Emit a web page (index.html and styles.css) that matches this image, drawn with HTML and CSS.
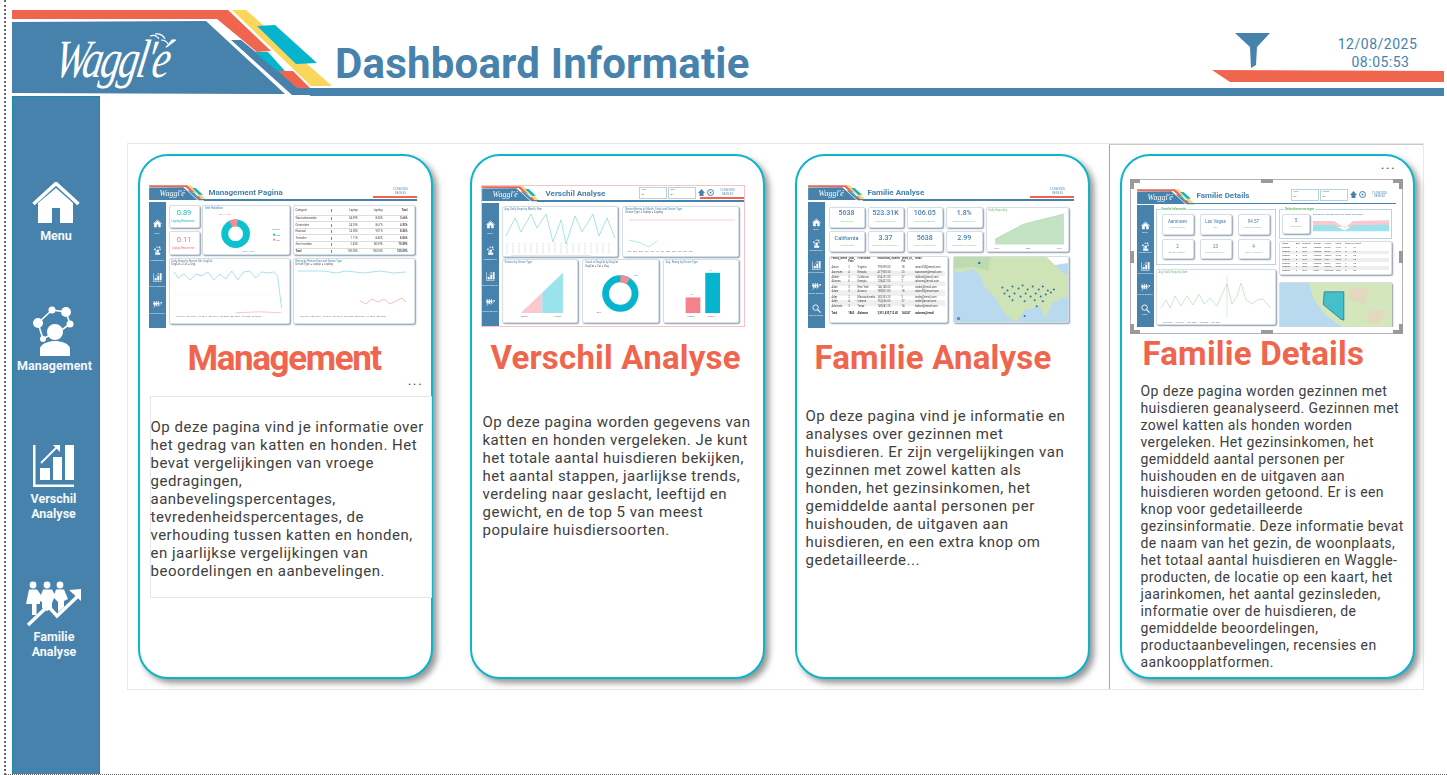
FILE: index.html
```html
<!DOCTYPE html>
<html lang="nl">
<head>
<meta charset="utf-8">
<title>Dashboard Informatie</title>
<link rel="stylesheet" href="styles.css">
</head>
<body>
<svg class="defs" aria-hidden="true">
  <symbol id="banner" viewBox="0 0 340 96">
    <polygon fill="#4682ac" points="12,22 206,21 285,94 12,93"/>
    <polygon fill="#fad75a" points="232,10 246,10 332,86 311,86"/>
    <polygon fill="#f0654d" points="12,10 228,10 271,51 257,52 217,19 12,19"/>
    <polygon fill="#4682ac" points="231,40 241,40 300,88 340,88 340,95 292,95"/>
    <polygon fill="#05b5ce" points="255,52 268,52 285,71 277,71"/>
    <polygon fill="#f0654d" points="278,71 293,71 310,88 297,88"/>
    <polygon fill="#05b5ce" points="257,26 275,25 317,63 296,64"/>
  </symbol>
  <symbol id="i-home" viewBox="0 0 48 42">
    <polyline points="1.5,22 24,1.5 46.5,22" fill="none" stroke="#fff" stroke-width="3.6"/>
    <path fill="#fff" d="M6,21 L24,6 L41,21 V41 H28 V26 H20 V41 H6Z"/>
  </symbol>
  <symbol id="i-mgmt" viewBox="0 0 44 53">
    <g stroke="#fff" stroke-width="1.6" fill="none">
      <path d="M6,19 L20,6 L34,8 L38,20 L27,28 M6,19 L11,35 L23,28"/>
    </g>
    <g fill="#fff">
      <circle cx="23" cy="28" r="8"/>
      <circle cx="6" cy="19" r="5"/>
      <circle cx="20" cy="6" r="3.5"/>
      <circle cx="34" cy="8" r="5"/>
      <circle cx="38" cy="20" r="3.5"/>
      <circle cx="11" cy="35" r="3"/>
      <path d="M8,52 V44 C10,39 17,37 23,37 C29,37 36,39 38,44 V52Z"/>
    </g>
  </symbol>
  <symbol id="i-chart" viewBox="0 0 44 44">
    <path fill="#fff" d="M1,1 H3.5 V40.5 H42 V43 H1Z"/>
    <rect fill="#fff" x="8" y="24" width="10" height="12"/>
    <rect fill="#fff" x="21" y="13" width="9" height="23"/>
    <rect fill="#fff" x="33" y="1" width="9" height="35"/>
    <path fill="none" stroke="#fff" stroke-width="1.8" d="M9,19 L26,2"/>
    <polygon fill="#fff" points="28,1 28,8 21,1"/>
  </symbol>
  <symbol id="i-fam" viewBox="0 0 56 46">
    <g fill="#fff">
      <circle cx="7" cy="4" r="3.4"/><circle cx="21" cy="4" r="3.4"/><circle cx="34" cy="4" r="3.4"/>
      <path d="M3,8.500 H11 L15,14 L17,8.500 H26 L28.500,13 L30,8.500 H38 L42,18 L38,20 V26 L32,31 V21 L28,17 L26,22 V27 L21,30 L16,27 V21 L14,20 L14,23 H10.500 V34 H6 V23 H0Z"/>
    </g>
    <polyline points="2,44 22,25 31,35 52,15" fill="none" stroke="#fff" stroke-width="3.4"/>
    <polygon fill="#fff" points="55,8 55,20 43,9"/>
  </symbol>
  <symbol id="i-search" viewBox="0 0 20 20">
    <circle cx="8" cy="8" r="6" fill="none" stroke="#fff" stroke-width="2"/>
    <path d="M12,12 L19,19" stroke="#fff" stroke-width="2.4"/>
  </symbol>
  <symbol id="i-tools" viewBox="0 0 17 8">
    <path fill="#4682ac" d="M0,4 L3.500,0 L7,4 H5.500 V7 H1.500 V4Z"/>
    <circle cx="12.500" cy="3.500" r="3" fill="none" stroke="#4682ac" stroke-width="1"/>
    <circle cx="12.500" cy="3.500" r="1" fill="#4682ac"/>
  </symbol>
</svg>

<div class="page">
  <header class="top">
    <svg class="top-banner"><use href="#banner"/></svg>
    <div class="logo">
      <span class="logo-text">Waggl'é</span>
      <svg class="logo-waves" viewBox="0 0 24 20"><path d="M3,3 Q9,1 12,6 M8,1 Q15,0 18,6 M14,7 Q19,7 21,11" fill="none" stroke="#fff" stroke-width="1.2"/></svg>
    </div>
    <h1 class="title">Dashboard Informatie</h1>
    <div class="top-right">
      <div class="stamp"><span>12/08/2025</span><span class="stamp-time">08:05:53</span></div>
      <svg class="funnel" viewBox="0 0 35 35"><polygon fill="#4682ac" points="0,0 35,0 22,14 21,32 16,35 15,14"/></svg>
      <svg class="redbar" viewBox="0 0 232 12" preserveAspectRatio="none"><polygon fill="#f0654d" points="0,0 232,1 232,12 18,12"/></svg>
    </div>
    <div class="top-line"></div>
  </header>

  <div class="body">
    <nav class="side">
      <a class="nav nav-menu"><svg class="ic-home"><use href="#i-home"/></svg><span>Menu</span></a>
      <a class="nav nav-mgmt"><svg class="ic-mgmt"><use href="#i-mgmt"/></svg><span>Management</span></a>
      <a class="nav nav-vers"><svg class="ic-chart"><use href="#i-chart"/></svg><span>Verschil<br>Analyse</span></a>
      <a class="nav nav-fam"><svg class="ic-fam"><use href="#i-fam"/></svg><span>Familie<br>Analyse</span></a>
    </nav>

    <main class="canvas">
      <div class="focus-line"></div>

      <!-- CARD 1 -->
      <section class="card card-1">
        <div class="th th-1">
          <div class="th-top"><svg class="th-ban"><use href="#banner"/></svg><span class="th-logo">Waggl'é</span><b class="th-title">Management Pagina</b><span class="th-date">12/08/2025<br>08:05:53</span><i class="th-red"></i></div>
          <div class="th-body">
            <div class="th-side"><svg><use href="#i-home"/></svg><span>Menu</span><svg><use href="#i-mgmt"/></svg><span>Management</span><svg><use href="#i-chart"/></svg><span>Verschil Analyse</span><svg><use href="#i-fam"/></svg><span>Familie Analyse</span></div>
            <div class="g1">
              <div class="mc kpi k-c"><b>0.89</b><span>Lapdog Recomme...</span></div>
              <div class="mc don1"><em>Intel Hobbilties</em>
                <svg viewBox="0 0 87 46"><circle cx="33" cy="25" r="11" fill="none" stroke="#0cc2cd" stroke-width="7"/><path d="M28,15 A11,11 0 0 1 35,14" fill="none" stroke="#f58a95" stroke-width="7"/><text x="16" y="6" class="st st-r">Cat 11.15%</text><text x="40" y="44" class="st st-c">Dog 71.36%</text><text x="70" y="21" class="st">DogCat</text><rect x="71" y="25" width="2" height="2" fill="#0cc2cd"/><text x="74" y="27" class="st">Dog</text><rect x="71" y="30" width="2" height="2" fill="#f58a95"/><text x="74" y="32" class="st">Cat</text></svg>
              </div>
              <div class="mc tb1">
                <div class="tr hd"><span>Categorie</span><span>Laptop</span><span>Lapdog</span><b>Total</b></div>
                <div class="tr"><span>Slaat onbevoeden</span><span>54.09%</span><span>8.50%</span><b>3.66%</b></div>
                <div class="tr"><span>Ontevreden</span><span>24.29%</span><span>8.67%</span><b>4.93%</b></div>
                <div class="tr"><span>Neutraal</span><span>14.50%</span><span>9.01%</span><b>8.86%</b></div>
                <div class="tr"><span>Tevreden</span><span>7.11%</span><span>8.43%</span><b>8.06%</b></div>
                <div class="tr"><span>Zeer tevreden</span><span>2.43%</span><span>80.59%</span><b>70.89%</b></div>
                <div class="tr tot"><b>Total</b><span>100.00%</span><span>100.00%</span><b>100.00%</b></div>
              </div>
              <div class="mc kpi k-r"><b>0.11</b><span>Laptop Recomme...</span></div>
              <div class="mc ln1"><em>Daily Steps by Review Dkt. DogCat</em><small>DogCat ● Cat ● Dog</small>
                <svg viewBox="0 0 120 52"><polyline fill="none" stroke="#7fd7e3" stroke-width=".7" points="4,6 8,12 14,8 20,14 26,8 32,10 38,6 44,14 50,8 56,13 62,5 68,14 74,6 80,5 86,12 92,6 98,7 104,6 108,10 112,42"/><polyline fill="none" stroke="#f5a0a8" stroke-width=".6" points="66,47 90,46 112,47"/><path d="M4,8 H112 M4,28 H112" stroke="#eee" stroke-width=".3"/><text x="6" y="51" class="st">Jan 2019 &#160; Apr 2019 &#160; Jul 2019 &#160; Oct 2019 &#160; Jan 2020 &#160; Apr 2020 &#160; Jul 2020 &#160; Oct 2020</text></svg>
              </div>
              <div class="mc ln1"><em>Rating by Review Date and Device Type</em><small>Device Type ● Laptop ● Lapdog</small>
                <svg viewBox="0 0 120 52"><polyline fill="none" stroke="#7fd7e3" stroke-width=".7" points="4,5 30,5 42,7 52,5 70,7 86,5 100,7 112,6"/><polyline fill="none" stroke="#f5a0a8" stroke-width=".7" points="66,35 72,38 78,33 84,36 90,33 96,38 102,35 108,32 112,36"/><text x="6" y="51" class="st">Jan 2019 &#160; Apr 2019 &#160; Jul 2019 &#160; Oct 2019 &#160; Jan 2020 &#160; Apr 2020 &#160; Jul 2020 &#160; Oct 2020</text></svg>
              </div>
            </div>
          </div>
        </div>
        <h2 class="head head-1">Management</h2>
        <button class="dots dots-1">•••</button>
        <p class="txt txt-1">Op deze pagina vind je informatie over<br>het gedrag van katten en honden. Het<br>bevat vergelijkingen van vroege<br>gedragingen,<br>aanbevelingspercentages,<br>tevredenheidspercentages, de<br>verhouding tussen katten en honden,<br>en jaarlijkse vergelijkingen van<br>beoordelingen en aanbevelingen.</p>
      </section>

      <!-- CARD 2 -->
      <section class="card card-2">
        <div class="th th-2">
          <div class="th-top"><svg class="th-ban"><use href="#banner"/></svg><span class="th-logo">Waggl'é</span><b class="th-title th-title-2">Verschil Analyse</b><span class="th-sl"><em>Year</em>All</span><span class="th-sl"><em>Qtrs</em>All</span><svg class="th-ics"><use href="#i-tools"/></svg><span class="th-date">12/08/2025<br>08:05:53</span><i class="th-red"></i></div>
          <div class="th-body">
            <div class="th-side"><svg><use href="#i-home"/></svg><span>Menu</span><svg><use href="#i-mgmt"/></svg><span>Management</span><svg><use href="#i-chart"/></svg><span>Verschil Analyse</span><svg><use href="#i-fam"/></svg><span>Familie Analyse</span></div>
            <div class="g2">
              <div class="mc a"><em>Avg. Daily Steps by Month, Year</em>
                <svg viewBox="0 0 115 47"><polyline fill="none" stroke="#7fd7e3" stroke-width=".7" points="3,26 12,8 18,22 28,4 34,18 43,4 50,32 58,10 63,34 72,6 79,22 90,4 96,26 104,8 112,28"/><rect x="8" y="45.500" width="80" height="1" fill="#ccc"/><path d="M4,33 V44 M10,33 V44 M16,33 V44 M22,33 V44 M28,33 V44 M34,33 V44 M40,33 V44 M46,33 V44 M52,33 V44 M58,33 V44 M64,33 V44 M70,33 V44 M76,33 V44 M82,33 V44 M88,33 V44 M94,33 V44 M100,33 V44 M106,33 V44" stroke="#b9c0c6" stroke-width=".6" stroke-dasharray="1 .6"/></svg>
              </div>
              <div class="mc b"><em>Recent Rating by Month, Stock and Device Type</em><small>Device Type ● Laptop ● Lapdog</small>
                <svg viewBox="0 0 115 40"><polyline fill="none" stroke="#f9c3c8" stroke-width=".8" points="6,6 112,6"/><polyline fill="none" stroke="#7fd7e3" stroke-width=".6" points="6,26 18,29 26,33 34,27 M52,28 80,29 92,27 110,29"/><text x="5" y="38" class="st">Apr &#160; Aug &#160; Dec &#160; Feb &#160; Jan &#160; Jul &#160; Jun &#160; Mar &#160; May &#160; Nov &#160; Oct &#160; Sep</text></svg>
              </div>
              <div class="mc c"><em>Volume by Device Type</em>
                <svg viewBox="0 0 76 56"><polygon fill="#f9c9cf" points="18,50 40,29 40,50"/><polygon fill="#9be3ec" points="40,29 61,9 61,50 40,50"/><text x="18" y="54" class="st">Laptop</text><text x="52" y="54" class="st">Lapdog</text></svg>
              </div>
              <div class="mc d"><em>Count of DogCat by DogCat</em><small>DogCat ● Cat ● Dog</small>
                <svg viewBox="0 0 76 48"><circle cx="38" cy="26" r="15" fill="none" stroke="#05b5ce" stroke-width="7"/><path d="M38,11 A15,15 0 0 1 46,13.500" fill="none" stroke="#f58a95" stroke-width="7"/><text x="52" y="8" class="st">Cat</text><text x="14" y="46" class="st">Dog</text></svg>
              </div>
              <div class="mc e"><em>Avg. Rating by Device Type</em>
                <svg viewBox="0 0 76 56"><rect x="22" y="34" width="15" height="16" fill="#f4828e"/><rect x="42" y="9" width="15" height="41" fill="#05b5ce"/><text x="26" y="32" class="st">1.8</text><text x="46" y="7" class="st">4.7</text><text x="24" y="54" class="st">Laptop</text><text x="44" y="54" class="st">Lapdog</text></svg>
              </div>
            </div>
          </div>
        </div>
        <h2 class="head head-2">Verschil Analyse</h2>
        <p class="txt txt-2">Op deze pagina worden gegevens van<br>katten en honden vergeleken. Je kunt<br>het totale aantal huisdieren bekijken,<br>het aantal stappen, jaarlijkse trends,<br>verdeling naar geslacht, leeftijd en<br>gewicht, en de top 5 van meest<br>populaire huisdiersoorten.</p>
      </section>

      <!-- CARD 3 -->
      <section class="card card-3">
        <div class="th th-3">
          <div class="th-top"><svg class="th-ban"><use href="#banner"/></svg><span class="th-logo">Waggl'é</span><b class="th-title">Familie Analyse</b><span class="th-date">12/08/2025<br>08:05:53</span><i class="th-red"></i></div>
          <div class="th-body">
            <div class="th-side"><svg><use href="#i-home"/></svg><span>Menu</span><svg><use href="#i-mgmt"/></svg><span>Management</span><svg><use href="#i-chart"/></svg><span>Verschil Analyse</span><svg><use href="#i-fam"/></svg><span>Familie Analyse</span><svg><use href="#i-search"/></svg><span>Familie Details</span></div>
            <div class="g3">
              <div class="g3-top">
                <div class="mc kp"><b>5638</b><span>Total Familie</span></div>
                <div class="mc kp"><b>523.31K</b><span>Gemiddelde Income</span></div>
                <div class="mc kp"><b>106.05</b><span>Gemiddelde Activity</span></div>
                <div class="mc kp"><b>1.8%</b><span>Uitgavenhuisdieren Ver...</span></div>
                <div class="mc area"><em class="green">Daily Steps Avg</em>
                  <svg viewBox="0 0 80 40"><polygon fill="#c3e3c4" points="8,33 8,28 36,13 76,3 76,33"/><polyline fill="none" stroke="#8fcb93" stroke-width=".5" points="8,28 36,13 76,3"/><text x="7" y="38" class="st">2019</text><text x="38" y="38" class="st">2020</text><text x="69" y="38" class="st">2021</text></svg>
                </div>
                <div class="mc kp"><b class="kp-sm">California</b><span>Hoogste Staat</span></div>
                <div class="mc kp"><b>3.37</b><span>Gemiddelde Geasseerde...</span></div>
                <div class="mc kp"><b>5638</b><span>Familie Huisdier Bezit</span></div>
                <div class="mc kp"><b>2.99</b><span>Gemiddelde Huishouden</span></div>
              </div>
              <div class="g3-bot">
                <div class="mc tb3">
                  <div class="r3 hd"><span>Family_Name</span><span>Total_Pets</span><span>First Name</span><span>Household_Income</span><span>Years_of_Pet</span><span>Email</span></div>
                  <div class="r3"><span>Aaron</span><span>2</span><span>Virginia</span><span>795,959.00</span><span>18</span><span>aaron200@email.com</span></div>
                  <div class="r3 alt"><span>Aaronsen</span><span>4</span><span>Nevada</span><span>477,900.50</span><span>23</span><span>kaaronsen@email.com</span></div>
                  <div class="r3"><span>Abbott</span><span>3</span><span>California</span><span>604,251.00</span><span>27</span><span>dabbott@email.com</span></div>
                  <div class="r3 alt"><span>Abrams</span><span>6</span><span>Georgia</span><span>128,437.00</span><span>7</span><span>iabrams@email.com</span></div>
                  <div class="r3"><span>Adair</span><span>3</span><span>New York</span><span>146,140.00</span><span>1</span><span>cadair@email.com</span></div>
                  <div class="r3 alt"><span>Adam</span><span>3</span><span>Arizona</span><span>789,821.00</span><span>18</span><span>adam00@email.com</span></div>
                  <div class="r3"><span>Adey</span><span>2</span><span>Massachusetts</span><span>343,353.25</span><span>3</span><span>eadey@email.com</span></div>
                  <div class="r3 alt"><span>Adler</span><span>4</span><span>Indiana</span><span>752,636.00</span><span>27</span><span>tadler@email.com</span></div>
                  <div class="r3"><span>Adornato</span><span>3</span><span>Texas</span><span>149,041.25</span><span>14</span><span>kadorn@email.com</span></div>
                  <div class="r3 tot"><b>Total</b><b>1860</b><b>Alabama</b><b>2,951,430,712.40</b><b>146247</b><b>aabrams@email</b></div>
                </div>
                <div class="mc map3">
                  <svg viewBox="0 0 113 66" preserveAspectRatio="none">
                    <rect width="113" height="66" fill="#b9d9ee"/>
                    <path fill="#cfe4b6" d="M0,0 H105 L100,8 L108,16 L113,18 V40 L98,46 L90,62 L85,50 L70,54 L62,66 L52,60 L40,40 L30,30 L26,18 L18,12 L6,16 L0,14Z"/>
                    <path fill="#bcdcb0" d="M0,0 H36 L34,14 L18,10 L0,12Z"/>
                    <path fill="#fff" d="M92,0 H113 V6 L100,8Z"/>
                    <g fill="#33709f"><circle cx="25" cy="6" r="1.200"/><circle cx="48" cy="31" r="1"/><circle cx="53" cy="34" r="1"/><circle cx="58" cy="30" r="1"/><circle cx="64" cy="32" r="1"/><circle cx="68" cy="29" r="1"/><circle cx="73" cy="33" r="1"/><circle cx="78" cy="30" r="1"/><circle cx="84" cy="33" r="1"/><circle cx="88" cy="30" r="1"/><circle cx="93" cy="34" r="1"/><circle cx="50" cy="37" r="1"/><circle cx="55" cy="40" r="1"/><circle cx="60" cy="37" r="1"/><circle cx="66" cy="40" r="1"/><circle cx="71" cy="37" r="1"/><circle cx="76" cy="40" r="1"/><circle cx="81" cy="37" r="1"/><circle cx="86" cy="40" r="1"/><circle cx="91" cy="38" r="1"/><circle cx="96" cy="36" r="1"/><circle cx="99" cy="33" r="1"/><circle cx="58" cy="44" r="1"/><circle cx="70" cy="45" r="1"/><circle cx="80" cy="44" r="1"/><circle cx="88" cy="45" r="1"/><circle cx="82" cy="50" r="1"/><circle cx="70" cy="60" r="1"/></g>
                    <rect x="3" y="61" width="3" height="3" fill="#5b8fd0"/>
                  </svg>
                </div>
              </div>
            </div>
          </div>
        </div>
        <h2 class="head head-3">Familie Analyse</h2>
        <p class="txt txt-3">Op deze pagina vind je informatie en<br>analyses over gezinnen met<br>huisdieren. Er zijn vergelijkingen van<br>gezinnen met zowel katten als<br>honden, het gezinsinkomen, het<br>gemiddelde aantal personen per<br>huishouden, de uitgaven aan<br>huisdieren, en een extra knop om<br>gedetailleerde...</p>
      </section>

      <!-- CARD 4 -->
      <section class="card card-4">
        <button class="dots dots-4">•••</button>
        <div class="sel">
          <i class="h h-tl"></i><i class="h h-tm"></i><i class="h h-tr"></i><i class="h h-ml"></i><i class="h h-mr"></i><i class="h h-bl"></i><i class="h h-bm"></i><i class="h h-br"></i>
          <div class="th th-4">
            <div class="th-top"><svg class="th-ban"><use href="#banner"/></svg><span class="th-logo">Waggl'é</span><b class="th-title">Familie Details</b><span class="th-sl"><em>Year</em>All</span><span class="th-sl"><em>Name</em>All</span><svg class="th-ics"><use href="#i-tools"/></svg><span class="th-date">12/08/2025<br>08:05:53</span></div>
            <div class="th-body">
              <div class="th-side"><svg><use href="#i-home"/></svg><span>Menu</span><svg><use href="#i-mgmt"/></svg><span>Management</span><svg><use href="#i-chart"/></svg><span>Verschil Analyse</span><svg><use href="#i-fam"/></svg><span>Familie Analyse</span><svg><use href="#i-search"/></svg><span>Back</span></div>
              <div class="g4">
                <fieldset class="fs fs-a"><legend>Familie Informatie</legend>
                  <div class="fs-grid">
                    <div class="mc kp4"><b>Aaronsen</b><span>Familie Naam</span></div>
                    <div class="mc kp4"><b>Las Vegas</b><span>City</span></div>
                    <div class="mc kp4"><b>94.57</b><span>Gemiddelde Act...</span></div>
                    <div class="mc kp4"><b>2</b><span>Aantal Waggle...</span></div>
                    <div class="mc kp4"><b>23</b><span>Pet Ownership (Y...</span></div>
                    <div class="mc kp4"><b>4</b><span>Total Huisdieren</span></div>
                  </div>
                </fieldset>
                <fieldset class="fs fs-b"><legend>Gebruikerservaringen</legend>
                  <div class="mc kp4 solo"><b>5</b><span>Reigoeds</span></div>
                  <div class="ch-b"><em>Average of Heartrate (BPM) by Month and Name</em>
                    <svg viewBox="0 0 72 20" preserveAspectRatio="none"><polygon fill="#f9c9cf" points="0,6 20,6 30,14 38,6 72,5 72,13 0,13"/><polygon fill="#9be3ec" points="0,11 20,11 30,17 38,11 72,10 72,18 0,18"/></svg>
                  </div>
                </fieldset>
                <div class="mc tb4">
                  <div class="r4 hd"><span>Name</span><span>Age</span><span>DogCat</span><span>Gender</span><span>Home</span><span>PetID</span><span>Rescue</span><span>Weight</span></div>
                  <div class="r4"><span>Reagan</span><span>4</span><span>Dog</span><span>Female</span><span>Chico</span><span>7796</span><span>Y</span><span>34</span></div>
                  <div class="r4 alt"><span>Reagan</span><span>5</span><span>Dog</span><span>Female</span><span>Daisy</span><span>3737</span><span>N</span><span>88</span></div>
                  <div class="r4"><span>Reagan</span><span>5</span><span>Dog</span><span>Female</span><span>Jessie</span><span>3795</span><span>N</span><span>56</span></div>
                  <div class="r4 alt"><span>Reagan</span><span>5</span><span>Dog</span><span>Female</span><span>Lucy</span><span>8655</span><span>Y</span><span>35</span></div>
                  <div class="r4"><span>Reagan</span><span>5</span><span>Dog</span><span>Female</span><span>Molly</span><span>7962</span><span>Y</span><span>32</span></div>
                  <div class="r4 alt"><span>Reagan</span><span>3</span><span>Dog</span><span>Male</span><span>Rocco</span><span>3705</span><span>N</span><span>34</span></div>
                  <div class="r4"><span>Reagan</span><span>3</span><span>Dog</span><span>Male</span><span>Sherlock</span><span>1099</span><span>N</span><span>56</span></div>
                </div>
                <div class="mc ln4"><em class="green">Avg. Daily Steps by Date</em>
                  <svg viewBox="0 0 118 50"><path d="M70,2 V44" stroke="#9cb" stroke-width=".4"/><polyline fill="none" stroke="#a8d8a9" stroke-width=".6" points="4,34 9,26 13,34 18,22 24,32 30,22 36,31 42,20 47,30 53,24 60,32 66,18 70,10 75,30 80,22 84,9 89,26 95,30 100,26 106,25 110,30 114,34"/><text x="6" y="49" class="st">Jan 2019 &#160; &#160; Jul 2019 &#160; &#160; Jan 2020 &#160; &#160; Jul 2020 &#160; &#160; Jan 2021</text></svg>
                </div>
                <div class="mc map4">
                  <svg viewBox="0 0 113 45" preserveAspectRatio="none">
                    <rect width="113" height="45" fill="#b9d9ee"/>
                    <path fill="#d3e6bc" d="M30,0 H113 V45 L63,45 L48,34 L34,17Z"/>
                    <path fill="#e3d8bd" d="M72,4 L90,6 L86,22 L70,16Z M92,26 L108,30 L100,42 L88,40Z"/>
                    <path fill="#45bfc9" stroke="#1d6a80" stroke-width=".7" d="M45,9 H65 V38 L62,37 L44,22Z"/>
                  </svg>
                </div>
              </div>
            </div>
          </div>
        </div>
        <h2 class="head head-4">Familie Details</h2>
        <p class="txt txt-4">Op deze pagina worden gezinnen met<br>huisdieren geanalyseerd. Gezinnen met<br>zowel katten als honden worden<br>vergeleken. Het gezinsinkomen, het<br>gemiddeld aantal personen per<br>huishouden en de uitgaven aan<br>huisdieren worden getoond. Er is een<br>knop voor gedetailleerde<br>gezinsinformatie. Deze informatie bevat<br>de naam van het gezin, de woonplaats,<br>het totaal aantal huisdieren en Waggle-<br>producten, de locatie op een kaart, het<br>jaarinkomen, het aantal gezinsleden,<br>informatie over de huisdieren, de<br>gemiddelde beoordelingen,<br>productaanbevelingen, recensies en<br>aankoopplatformen.</p>
      </section>
    </main>
  </div>
</div>
</body>
</html>
```

FILE: styles.css
```css
* { box-sizing: border-box; }
html, body { margin: 0; padding: 0; }
body { width: 1447px; height: 775px; overflow: hidden; background: #fff; font-family: Roboto, "Liberation Sans", sans-serif; color: #404040; }
.defs { position: absolute; width: 0; height: 0; }
em { font-style: normal; }

.page { margin-left: 4px; height: 775px; border-left: 2px dotted #666; border-bottom: 1px dotted #666; display: flex; flex-direction: column; }

/* Header */
.top { position: relative; height: 96px; flex: none; display: flex; align-items: flex-start; }
.top-banner { position: absolute; left: -6px; top: 0; width: 340px; height: 96px; }
.top-line { position: absolute; left: 304px; right: 3px; top: 87.500px; height: 8px; background: #4682ac; }
.logo { position: absolute; left: 50px; top: 29px; }
.logo-text { font-family: "Liberation Serif", serif; font-style: italic; font-size: 54px; line-height: 60px; color: #fff; letter-spacing: -3px; display: inline-block; transform: skewX(-10deg) scaleX(.75); transform-origin: left; white-space: nowrap; }
.logo-waves { position: absolute; left: 91px; top: 4px; width: 24px; height: 20px; }
.title { margin: 38px 0 0 329px; font-size: 42px; line-height: 52px; font-weight: 700; color: #4682ac; letter-spacing: .2px; white-space: nowrap; }
.top-right { position: absolute; left: 1206px; right: 3px; top: 0; height: 96px; }
.funnel { position: absolute; left: 23px; top: 33px; width: 35px; height: 35px; }
.redbar { position: absolute; left: 0; top: 69.500px; width: 232px; height: 12px; }
.stamp { position: absolute; left: 125px; top: 35px; width: 81px; display: flex; flex-direction: column; align-items: center; font-size: 14px; line-height: 18px; color: #4682ac; letter-spacing: .5px; }
.stamp-time { margin-left: 6px; }

/* Layout */
.body { display: flex; flex: 1; min-height: 0; }
.side { width: 88px; margin-left: 6px; background: #4682ac; border: 1px solid #1a8b9d; border-width: 1px 1px 0 1px; flex: none; display: flex; flex-direction: column; align-items: center; color: #fff; font-size: 12.500px; font-weight: 700; line-height: 15px; text-align: center; }
.nav { display: flex; flex-direction: column; align-items: center; color: #f4f8fb; }
.ic-home { width: 48px; height: 42px; display: block; }
.ic-mgmt { width: 44px; height: 53px; display: block; }
.ic-chart { width: 44px; height: 44px; display: block; }
.ic-fam { width: 56px; height: 46px; display: block; }
.nav-menu { margin-top: 85px; }
.nav-menu span { margin-top: 4px; }
.nav-mgmt { margin-top: 61px; margin-right: 3px; }
.nav-mgmt span { margin-top: 1px; font-size: 12.500px; letter-spacing: .1px; }
.nav-vers { margin-top: 71px; margin-right: 5px; }
.nav-vers span { margin-top: 3px; }
.nav-fam { margin-top: 60px; margin-right: 4px; }
.nav-fam span { margin-top: 2px; }

.canvas { position: relative; width: 1297px; height: 547px; margin: 47px 0 0 27px; border: 1px solid #e8e8e8; display: flex; align-items: flex-start; padding: 10px 0 0 9.500px; }
.focus-line { position: absolute; left: 981px; top: 0; bottom: 0; right: 0; border-left: 1px solid #a5a5a5; border-top: 1px solid #c8c8c8; pointer-events: none; }

/* Cards */
.card { position: relative; width: 295px; height: 524.500px; flex: none; background: #fff; border: 2.500px solid #0bb5cc; border-radius: 30px; box-shadow: 4px 4px 6px rgba(0,0,0,.42); display: flex; flex-direction: column; }
.card-2 { margin-left: 37px; }
.card-3, .card-4 { margin-left: 30px; }
.head { margin: 0; font-size: 33px; line-height: 40px; font-weight: 700; color: #f0654d; white-space: nowrap; letter-spacing: .2px; }
.head-1 { margin: 11px 0 0 48px; font-size: 35px; letter-spacing: -1.4px; }
.head-2 { margin: 11px 0 0 19px; }
.head-3 { margin: 10px 0 0 18px; }
.head-4 { margin: 0 0 0 21px; }
.txt { margin: 0; font-size: 15px; line-height: 18px; color: #404040; white-space: nowrap; letter-spacing: .5px; }
.txt-1 { margin: 17px -1px 0 10px; padding: 21px 0 18px 0; border: 1px solid #e6e6e6; height: 202px; }
.txt-2 { margin: 35px 0 0 11px; }
.txt-3 { margin: 29px 0 0 9px; }
.txt-4 { margin: 9px 0 0 19px; font-size: 14px; line-height: 16.900px; letter-spacing: .4px; }
.dots { position: absolute; background: none; border: 0; padding: 0; font-size: 6px; letter-spacing: 3px; color: #555; line-height: 8px; font-family: "Liberation Sans", sans-serif; }
.dots-1 { left: 269px; top: 224px; }
.dots-4 { left: 260px; top: 8px; }

/* Selection frame */
.sel { position: relative; margin: 23px 0 0 8px; width: 273px; height: 155px; border: 1px solid #b5b5b5; padding: 8px 0 0 6px; }
.h { position: absolute; background: #9a9a9a; }
.h-tm, .h-bm { width: 12px; height: 4px; left: 130px; }
.h-tm { top: -1px; } .h-bm { bottom: -1px; }
.h-ml, .h-mr { width: 4px; height: 12px; top: 71px; }
.h-ml { left: -1px; } .h-mr { right: -1px; }
.h-tl, .h-tr, .h-bl, .h-br { width: 10px; height: 10px; background: none; border: 0 solid #9a9a9a; }
.h-tl { left: -1px; top: -1px; border-width: 4px 0 0 4px; }
.h-tr { right: -1px; top: -1px; border-width: 4px 4px 0 0; }
.h-bl { left: -1px; bottom: -1px; border-width: 0 0 4px 4px; }
.h-br { right: -1px; bottom: -1px; border-width: 0 4px 4px 0; }

/* Thumbnails shared */
.th { width: 267px; height: 143px; flex: none; background: #fff; display: flex; flex-direction: column; overflow: hidden; filter: blur(.4px); font-size: 3px; line-height: 1.1; color: #555; }
.th-1 { margin: 28.500px 0 0 9px; width: 268px; }
.th-2 { margin: 28.500px 0 0 9px; width: 264px; height: 142px; border: 1px solid #f7c3c6; }
.th-3 { margin: 28.500px 0 0 11px; width: 266px; }
.th-4 { width: 259px; height: 139px; }
.th-top { position: relative; height: 17px; flex: none; display: flex; align-items: center; justify-content: flex-end; padding: 0 4px 3px 0; }
.th-top::after { content: ""; position: absolute; left: 55px; right: 0; bottom: 1px; height: 1.200px; background: #4682ac; }
.th-ban { position: absolute; left: -2px; top: -1.500px; width: 60px; height: 18px; }
.th-logo { position: absolute; left: 11px; top: 4.500px; font: italic 8px "Liberation Serif", serif; color: #fff; white-space: nowrap; }
.th-title { position: absolute; left: 60px; top: 3px; font-size: 8px; line-height: 10px; font-weight: 700; color: #4682ac; white-space: nowrap; }
.th-title-2 { left: 64px; }
.th-date { width: 24px; text-align: center; color: #4682ac; font-size: 2.800px; }
.th-sl { width: 28px; height: 12px; margin-right: 1px; border: .5px solid #bcd0de; display: flex; flex-direction: column; justify-content: space-between; padding: 1px 2px; font-size: 2.500px; color: #777; }
.th-sl em { color: #4682ac; }
.th-ics { width: 17px; height: 8px; margin: 0 1px 0 1px; flex: none; }
.th-red { position: absolute; right: 0; top: 11px; width: 44px; height: 2px; background: #f0654d; }
.th-body { flex: 1; display: flex; min-height: 0; }
.th-side { width: 17px; flex: none; background: #4682ac; display: flex; flex-direction: column; align-items: center; justify-content: space-around; padding: 9px 0 10px; color: #eaf2f7; font-size: 2.200px; text-align: center; }
.th-side svg { width: 9px; height: 9px; flex: none; margin-top: 7px; }
.th-side span { display: block; margin-top: 1px; }
.mc { background: #fff; border: .6px solid #d4dee7; border-radius: 2px; box-shadow: 1px 1px 1.500px rgba(85,105,125,.65); overflow: hidden; min-width: 0; min-height: 0; }
.mc em, .mc small { display: block; font-size: 2.700px; color: #4682ac; padding: 1px 2px 0; white-space: nowrap; }
.mc em.green { color: #6dbb75; }
.mc small { color: #666; }
.mc svg { display: block; width: 100%; }
.st { font-size: 2.300px; fill: #777; font-family: Roboto, sans-serif; }
.st-r { fill: #f0707f; }
.st-c { fill: #16b8cc; }

/* Thumb 1 */
.g1 { flex: 1; display: grid; grid-template-columns: 31px 88px 122px; grid-template-rows: 23.500px 23.500px 66px; gap: 3px 2.500px; padding: 3px 2px 0 3px; }
.kpi { display: flex; flex-direction: column; align-items: center; justify-content: center; gap: 3px; font-size: 2.800px; white-space: nowrap; }
.kpi b { font-size: 7.500px; line-height: 8px; font-weight: 400; }
.k-c { color: #16b8cc; grid-area: 1 / 1; }
.k-r { color: #f0707f; grid-area: 2 / 1; }
.don1 { grid-area: 1 / 2 / 3 / 3; }
.tb1 { grid-area: 1 / 3 / 3 / 4; padding: 2px 6px 0 2px; }
.tr { display: grid; grid-template-columns: 30fr 20fr 20fr 20fr; border-bottom: .3px solid #ddd; padding: 1.300px 0; font-size: 2.700px; color: #444; text-align: right; white-space: nowrap; }
.tr > :first-child { text-align: left; border-right: .5px solid #888; margin-right: 1px; }
.tr.hd { padding-bottom: 3px; }
.tr.tot { border: 0; }
.g1 .ln1:nth-last-child(2) { grid-area: 3 / 1 / 4 / 3; }
.g1 .ln1:last-child { grid-area: 3 / 3 / 4 / 4; }

/* Thumb 2 */
.g2 { flex: 1; display: grid; grid-template-columns: repeat(6, 1fr); grid-template-rows: 51px 64px; gap: 2.500px 4px; padding: 3px 4px 0 3px; }
.g2 .a, .g2 .b { grid-column: span 3; }
.g2 .c, .g2 .d, .g2 .e { grid-column: span 2; }

/* Thumb 3 */
.g3 { flex: 1; min-width: 0; display: flex; flex-direction: column; gap: 3.500px; padding: 5px 5px 0 4px; }
.g3-top { display: grid; grid-template-columns: 36px 36px 36.500px 36.500px 1fr; grid-template-rows: 21px 21px; gap: 3.500px 3px; }
.g3-bot { display: grid; grid-template-columns: 119px 1fr; grid-template-rows: 67px; gap: 5px; }
.kp { display: flex; flex-direction: column; align-items: center; justify-content: center; gap: 3px; white-space: nowrap; font-size: 2.300px; color: #8cc792; }
.kp b { font-size: 7px; line-height: 7.500px; font-weight: 500; color: #4682ac; }
.kp b.kp-sm { font-size: 5.500px; }
.g3-top .area { grid-area: 1 / 5 / 3 / 6; }
.tb3 { padding: 1px 2px; }
.map3 svg { height: 100%; }
.r3 { display: grid; grid-template-columns: 15fr 8fr 18fr 22fr 12fr 28fr; gap: 1px; font-size: 2.600px; padding: .9px 0; color: #444; white-space: nowrap; }
.r3.hd { font-weight: 700; padding-bottom: 2px; white-space: normal; word-break: break-all; }
.r3.alt { background: #efefef; padding-bottom: 1.500px; }
.r3.tot { padding-top: 3px; color: #333; }

/* Thumb 4 */
.g4 { flex: 1; display: grid; grid-template-columns: 120px 113px; grid-template-rows: 31px 34px 4px 46px; gap: 1.500px 3.500px; padding: 3px 2px 0 2px; }
.fs { margin: 0; padding: 0 2px 2px; min-width: 0; border: .7px solid #bcd3e2; }
.fs legend { font-size: 3px; color: #6dbb75; font-weight: 700; padding: 0 1px; margin-left: 2px; }
.fs-a { grid-area: 1 / 1 / 3 / 2; height: 57px; }
.fs-grid { display: grid; grid-template-columns: repeat(3, 32px); justify-content: space-around; grid-template-rows: 21px 20px; gap: 4px 0; padding-top: 3px; }
.fs-b { grid-area: 1 / 2 / 2 / 3; display: flex; gap: 3px; align-items: center; }
.kp4 { display: flex; flex-direction: column; align-items: center; justify-content: center; gap: 3px; white-space: nowrap; font-size: 2.500px; color: #8cc792; }
.kp4 b { font-size: 4.500px; line-height: 5px; font-weight: 400; color: #4682ac; }
.solo { width: 28px; height: 20px; flex: none; }
.ch-b { flex: 1; min-width: 0; font-size: 2.300px; color: #4682ac; white-space: nowrap; overflow: hidden; }
.ch-b svg { display: block; width: 100%; height: 17px; }
.tb4 { grid-area: 2 / 2 / 3 / 3; padding: 1px 2px 0; }
.r4 { display: grid; grid-template-columns: 10fr 5fr 8fr 8fr 8fr 7fr 6fr 26fr; font-size: 2.400px; padding: .6px 0; color: #444; white-space: nowrap; }
.r4.alt { background: #eee; }
.r4.hd { padding-bottom: 1px; }
.ln4 { grid-area: 3 / 1 / 5 / 2; margin-top: -7px; height: 56px; }
.map4 { grid-area: 4 / 2 / 5 / 3; }
.map4 svg { height: 100%; }
```
